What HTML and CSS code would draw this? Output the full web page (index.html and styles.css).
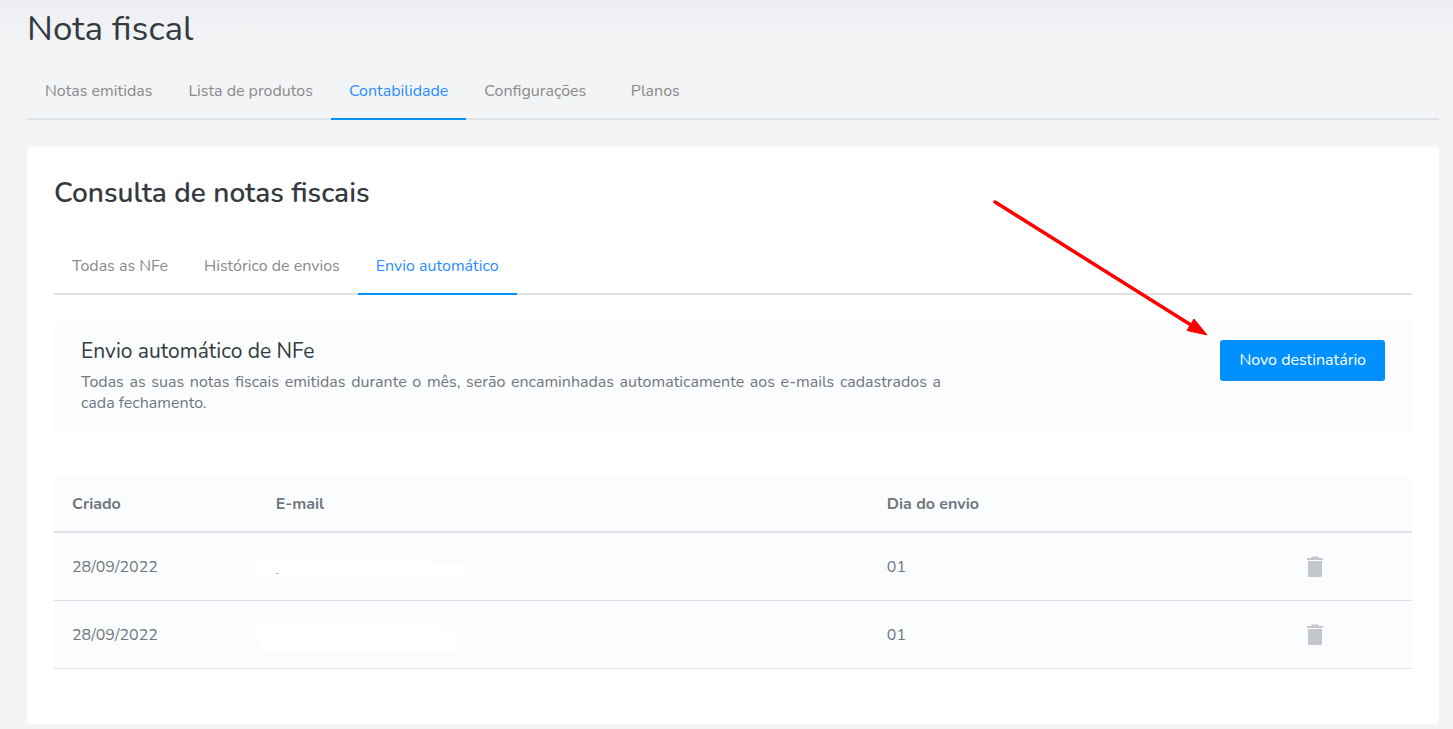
FILE: index.html
```html
<!DOCTYPE html>
<html lang="pt-BR">
<head>
<meta charset="utf-8">
<title>Nota fiscal</title>
<link rel="stylesheet" href="styles.css">
</head>
<body>
<main class="page">
  <h1 class="page-title">Nota fiscal</h1>
  <nav class="tabs">
    <a class="tab" href="#">Notas emitidas</a>
    <a class="tab" href="#">Lista de produtos</a>
    <a class="tab tab-active" href="#">Contabilidade</a>
    <a class="tab" href="#">Configurações</a>
    <a class="tab" href="#">Planos</a>
  </nav>
  <section class="card">
    <h2 class="card-title">Consulta de notas fiscais</h2>
    <nav class="tabs">
      <a class="tab" href="#">Todas as NFe</a>
      <a class="tab" href="#">Histórico de envios</a>
      <a class="tab tab-active" href="#">Envio automático</a>
    </nav>
    <div class="notice">
      <div class="notice-text">
        <h3 class="notice-title">Envio automático de NFe</h3>
        <p class="notice-body">Todas as suas notas fiscais emitidas durante o mês, serão encaminhadas automaticamente aos e-mails cadastrados a cada fechamento.</p>
      </div>
      <div class="notice-action">
        <button class="button" type="button">Novo destinatário</button>
        <svg class="arrow" width="220" height="142" viewBox="0 0 220 142" aria-hidden="true">
          <path d="M4 5 200 128" fill="none" stroke="#f00" stroke-width="3.500" stroke-linecap="round"/>
          <path d="M216 138 203 122 196 133.500Z" fill="#f00" stroke="#f00"/>
        </svg>
      </div>
    </div>
    <table class="recipients">
      <thead>
        <tr><th class="col-date">Criado</th><th class="col-mail">E-mail</th><th class="col-day">Dia do envio</th><th class="col-action"></th></tr>
      </thead>
      <tbody>
        <tr>
          <td>28/09/2022</td>
          <td class="mail-cell"><svg class="mask" width="230" height="36" viewBox="0 0 230 36" aria-hidden="true"><path d="M17 9H185V12H218Q221 18 219 25H190V27H14L12 20H8V12H17Z" fill="#fff"/><path d="M32 22.500H35" stroke="#bbb"/></svg></td>
          <td>01</td>
          <td class="action-cell"><button class="icon-button" type="button" aria-label="Excluir"><svg width="18" height="24" viewBox="0 0 18 24"><path d="M6 .500h6l1 1.500h4v2H1V2h4zM2 5h14v14.500q0 1.500-1.500 1.500h-11Q2 21 2 19.500z" fill="#c3c6ca"/></svg></button></td>
        </tr>
        <tr>
          <td>28/09/2022</td>
          <td class="mail-cell"><svg class="mask" width="230" height="36" viewBox="0 0 230 36" aria-hidden="true"><path d="M12 6H196V12H212L220 20 213 26 210 32H24L17 28V19H0V15H12Z" fill="#fff"/></svg></td>
          <td>01</td>
          <td class="action-cell"><button class="icon-button" type="button" aria-label="Excluir"><svg width="18" height="24" viewBox="0 0 18 24"><path d="M6 .500h6l1 1.500h4v2H1V2h4zM2 5h14v14.500q0 1.500-1.500 1.500h-11Q2 21 2 19.500z" fill="#c3c6ca"/></svg></button></td>
        </tr>
      </tbody>
    </table>
  </section>
</main>
</body>
</html>
```
FILE: styles.css
```css
* { box-sizing: border-box; }
body {
  margin: 0;
  min-height: 100vh;
  background: #f3f4f6 linear-gradient(#edeef1, #f3f4f6) 0 0 / 100% 40px no-repeat;
  color: #6f777e;
  font: 16px/24px Nunito, Lato, sans-serif;
}
.page { padding: 9px 14px 5px 27px; }
h1, h2, h3, p { margin: 0; }
.page-title { color: #343a40; font-size: 35px; line-height: 40px; font-weight: 400; }
.tabs { display: flex; border-bottom: 2px solid #dee2e6; }
.page-title + .tabs { margin: 13px 0 27px; }
.tab {
  min-width: 102px;
  margin-bottom: -2px;
  padding: 17px 18px 15px;
  border-bottom: 2px solid transparent;
  color: #8a8a8a;
  text-align: center;
  text-decoration: none;
}
.tab-active { border-color: #0690fb; color: #2a8dff; }
.card { padding: 28px 27px 55px; border-radius: 4px; background: #fff; }
.card-title { margin-bottom: 26px; color: #343a40; font-size: 28px; line-height: 36px; font-weight: 600; }
.notice {
  display: flex;
  justify-content: space-between;
  align-items: flex-start;
  margin: 27px 0 45px;
  padding: 17px 27px 18px;
  background: #fbfcfe;
}
.notice-text { flex: 0 1 860px; }
.notice-title { color: #343a40; font-size: 21px; line-height: 24px; font-weight: 400; margin-bottom: 9px; }
.notice-body { line-height: 21px; text-align: justify; }
.notice-action { position: relative; padding-top: 1px; }
.button {
  padding: 8px 19px;
  border: 0;
  border-radius: 3px;
  background: #0090ff;
  color: #fff;
  font: inherit;
  line-height: 25px;
}
.arrow { position: absolute; right: 174px; bottom: 42px; }
.recipients { width: 100%; table-layout: fixed; border-collapse: collapse; background: #fbfcfe; text-align: left; }
.recipients th { height: 55px; padding: 0 18px; border-bottom: 2px solid #dee2e6; font-weight: 700; }
.recipients td { height: 68px; padding: 2px 18px 0; border-bottom: 1px solid #dee2e6; }
.col-date { width: 15%; }
.col-mail { width: 45%; }
.col-action { width: 14%; }
.recipients .mail-cell { position: relative; }
.mask { position: absolute; left: -14px; top: 18px; }
.recipients .action-cell { padding-right: 22px; text-align: center; }
.icon-button { display: inline-flex; padding: 0; border: 0; background: none; vertical-align: middle; }
```
